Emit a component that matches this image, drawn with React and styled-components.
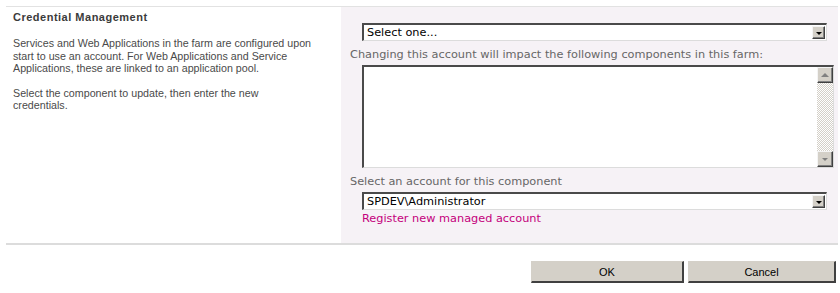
import React from 'react';
import styled, { createGlobalStyle } from 'styled-components';

const Global = createGlobalStyle`
  html, body { margin: 0; padding: 0; background: #fff; }
  body { width: 840px; height: 293px; overflow: hidden; }
`;

const Page = styled.div`
  padding: 6px 2px 0 6px;
`;

const Section = styled.div`
  display: grid;
  grid-template-columns: 335px 1fr;
  border-top: 1px solid #e2e2e2;
  border-bottom: 2px solid #dcdcdc;
`;

const Description = styled.div`
  padding: 4px 0 0 7px;
  font-family: "Liberation Sans", Arial, sans-serif;
  font-size: 10.7px;
  color: #4a4a4a;
`;

const DescBody = styled.div`
  width: 301px;
`;

const Title = styled.h3`
  margin: 0;
  font-size: 11px;
  line-height: 13px;
  font-weight: bold;
  letter-spacing: 0.5px;
  color: #3b3b3b;
`;

const Para = styled.p`
  margin: ${(p) => (p.$first ? '13px' : '12px')} 0 0;
  line-height: 12.6px;
`;

const Panel = styled.div`
  background: #f6f2f6;
  padding: 16px 4px 0 9px;
  min-height: 220px;
  font-family: "DejaVu Sans", Verdana, sans-serif;
  font-size: 11.3px;
`;

const Field = styled.div`
  margin-left: 12px;
  margin-right: ${(p) => p.$right || 0}px;
`;

const Label = styled.div`
  color: #666;
  line-height: 14px;
  margin: ${(p) => p.$m || '0'};
`;

const SelectBox = styled.div`
  display: flex;
  align-items: center;
  height: 18px;
  box-sizing: border-box;
  background: #fff;
  border-style: solid;
  border-width: 2px 1px 1px 2px;
  border-color: #4a4a4a #dcdcdc #dcdcdc #4a4a4a;
  color: #000;
  padding-left: 3px;
`;

const SelectText = styled.span`
  flex: 1;
  line-height: 14px;
`;

const ArrowButton = styled.span`
  width: 13px;
  height: 13px;
  box-sizing: border-box;
  margin-right: 1px;
  background: #d4d0c8;
  border-style: solid;
  border-width: 1px;
  border-color: #f4f4f4 #404040 #404040 #f4f4f4;
  box-shadow: inset -1px -1px 0 #808080;
  display: flex;
  align-items: center;
  justify-content: center;
`;

const TriDown = styled.span`
  width: 0;
  height: 0;
  border-left: 3px solid transparent;
  border-right: 3px solid transparent;
  border-top: 3px solid ${(p) => p.$color || '#000'};
  margin-top: 1px;
`;

const TriUp = styled.span`
  width: 0;
  height: 0;
  border-left: 4px solid transparent;
  border-right: 4px solid transparent;
  border-bottom: 4px solid ${(p) => p.$color || '#000'};
`;

const TextArea = styled.div`
  display: flex;
  justify-content: flex-end;
  height: 103px;
  box-sizing: border-box;
  background: #fff;
  border-style: solid;
  border-width: 2px 1px 1px 2px;
  border-color: #4a4a4a #dcdcdc #dcdcdc #4a4a4a;
`;

const ScrollBar = styled.div`
  width: 16px;
  display: flex;
  flex-direction: column;
  background-color: #fff;
  background-image: repeating-conic-gradient(#d4d0c8 0 25%, #fff 0 50%);
  background-size: 2px 2px;
`;

const ScrollButton = styled.div`
  width: 16px;
  height: 16px;
  box-sizing: border-box;
  background: #d4d0c8;
  border-style: solid;
  border-width: 1px;
  border-color: #f4f4f4 #404040 #404040 #f4f4f4;
  box-shadow: inset -1px -1px 0 #808080;
  display: flex;
  align-items: center;
  justify-content: center;
`;

const Track = styled.div`
  flex: 1;
`;

const Link = styled.a`
  display: block;
  color: #c4007c;
  text-decoration: none;
  line-height: 14px;
  margin: 2px 0 0 12px;
`;

const Buttons = styled.div`
  display: flex;
  justify-content: flex-end;
  gap: 4px;
  padding: 16px 2px 0 0;
`;

const Button = styled.button`
  width: ${(p) => p.$w}px;
  height: 22px;
  box-sizing: border-box;
  background: #d4d0c8;
  border-style: solid;
  border-width: 1px 2px 2px 1px;
  border-color: #d4d0c8 #404040 #404040 #d4d0c8;
  font-family: "Liberation Sans", Arial, sans-serif;
  font-size: 11px;
  color: #000;
  padding: 0;
`;

function Select({ value }) {
  return (
    <SelectBox>
      <SelectText>{value}</SelectText>
      <ArrowButton>
        <TriDown />
      </ArrowButton>
    </SelectBox>
  );
}

export default function App() {
  return (
    <Page>
      <Global />
      <Section>
        <Description>
          <Title>Credential Management</Title>
          <DescBody>
            <Para $first>
              Services and Web Applications in the farm are configured upon start to use an account. For Web Applications
              and Service Applications, these are linked to an application pool.
            </Para>
            <Para>Select the component to update, then enter the new credentials.</Para>
          </DescBody>
        </Description>
        <Panel>
          <Field $right={7}>
            <Select value="Select one..." />
          </Field>
          <Label $m="7px 0 3px">Changing this account will impact the following components in this farm:</Label>
          <Field>
            <TextArea>
              <ScrollBar>
                <ScrollButton>
                  <TriUp $color="#808080" />
                </ScrollButton>
                <Track />
                <ScrollButton>
                  <TriDown $color="#808080" />
                </ScrollButton>
              </ScrollBar>
            </TextArea>
          </Field>
          <Label $m="7px 0 3px">Select an account for this component</Label>
          <Field $right={7}>
            <Select value="SPDEV\Administrator" />
          </Field>
          <Link href="#">Register new managed account</Link>
        </Panel>
      </Section>
      <Buttons>
        <Button $w={153}>OK</Button>
        <Button $w={148}>Cancel</Button>
      </Buttons>
    </Page>
  );
}
